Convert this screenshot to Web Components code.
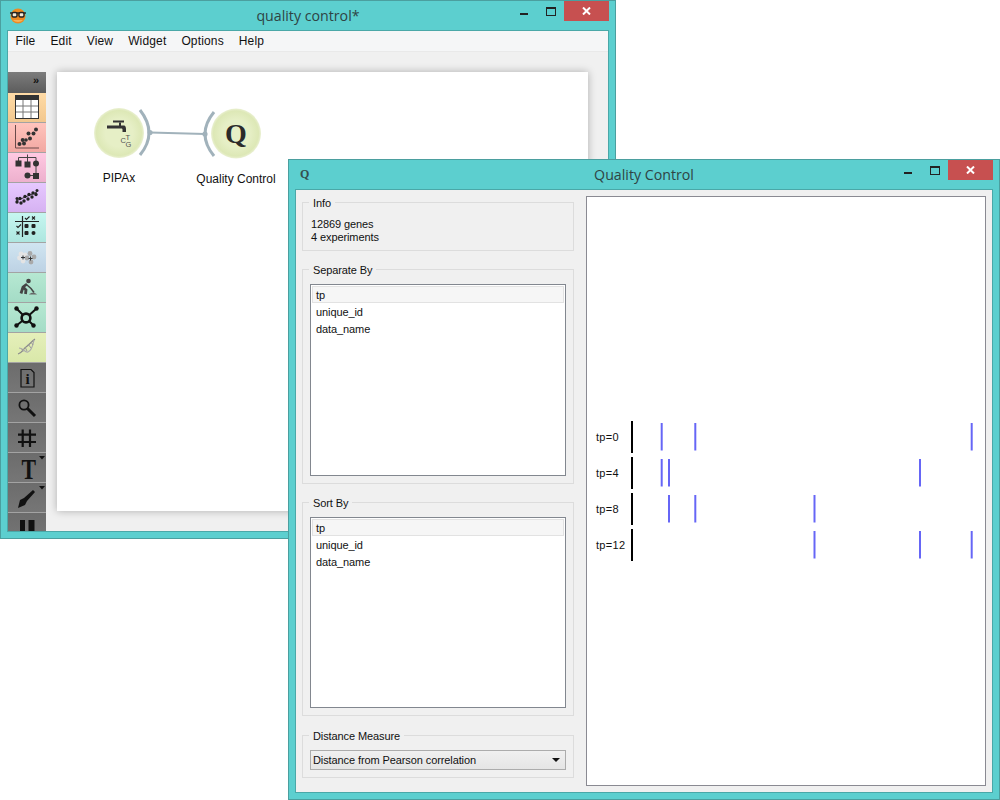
<!DOCTYPE html>
<html>
<head>
<meta charset="utf-8">
<title>quality control</title>
<style>
  html, body { margin: 0; padding: 0; background: #fff; }
  body { width: 1000px; height: 800px; position: relative; overflow: hidden; font-family: "Open Sans", "Liberation Sans", sans-serif; }
  #canvasWin { left: 0; top: 0; width: 616px; height: 539px; }
  #qcWin { left: 288px; top: 159px; width: 712px; height: 641px; }
  .lower { margin-top: 1px; }
</style>
</head>
<body>

<os-window id="canvasWin" heading="quality control*">
  <svg slot="icon" width="18" height="16" viewBox="0 0 18 16">
    <circle cx="9" cy="8" r="7.5" fill="#ee8a22"/>
    <path d="M4 12c2 2.6 8 2.6 10 0" fill="#f7b25a"/>
    <path d="M1 5l16 0" stroke="#222" stroke-width="1.4"/>
    <rect x="3" y="4.5" width="5" height="4.5" rx="1.5" fill="#f4e9d8" stroke="#222" stroke-width="1.4"/>
    <rect x="10" y="4.5" width="5" height="4.5" rx="1.5" fill="#f4e9d8" stroke="#222" stroke-width="1.4"/>
  </svg>
  <menu-bar>
    <span>File</span><span>Edit</span><span>View</span><span>Widget</span><span>Options</span><span>Help</span>
  </menu-bar>
  <schema-workspace>
    <dock-bar slot="dock">
      <dock-button tint="#ffdba6,#f2c78e" icon="table"></dock-button>
      <dock-button tint="#ffc4bd,#f2a8a2" icon="scatter"></dock-button>
      <dock-button tint="#ffc9e2,#edb0cd" icon="tree"></dock-button>
      <dock-button tint="#e6c8ff,#d6b2f2" icon="cloud"></dock-button>
      <dock-button tint="#c6f6f0,#ade6df" icon="grid"></dock-button>
      <dock-button tint="#d0e5f1,#bdd2e4" icon="blobs"></dock-button>
      <dock-button tint="#b6e8d2,#a4dcc6" icon="worker"></dock-button>
      <dock-button tint="#b6e8d2,#a4dcc6" icon="network"></dock-button>
      <dock-button tint="#e5efba,#d9e8a9" icon="dna"></dock-button>
      <dock-button tint="#6c6c6c,#767676" icon="info"></dock-button>
      <dock-button tint="#6c6c6c,#767676" icon="search"></dock-button>
      <dock-button tint="#6c6c6c,#767676" icon="hash"></dock-button>
      <dock-button tint="#6c6c6c,#767676" icon="text"></dock-button>
      <dock-button tint="#6c6c6c,#767676" icon="pen"></dock-button>
      <dock-button tint="#6c6c6c,#767676" icon="pause"></dock-button>
    </dock-bar>
    <schema-canvas></schema-canvas>
  </schema-workspace>
</os-window>

<os-window id="qcWin" heading="Quality Control">
  <span slot="icon" style="font:bold 12px 'Liberation Serif',serif;color:#35504f;display:block;margin-left:3px;margin-top:-2px">Q</span>
  <qc-layout>
    <group-box label="Info" slot="side">
      <div style="padding:1px 0 0 1px;margin-bottom:-1px;line-height:13px">12869 genes<br>4 experiments</div>
    </group-box>
    <group-box label="Separate By" grow slot="side">
      <list-view items="tp,unique_id,data_name"></list-view>
    </group-box>
    <group-box label="Sort By" grow slot="side">
      <list-view items="tp,unique_id,data_name"></list-view>
    </group-box>
    <group-box class="lower" label="Distance Measure" slot="side">
      <combo-box text="Distance from Pearson correlation"></combo-box>
    </group-box>
    <qc-plot slot="plot">
      <plot-row label="tp=0" ticks="39.7,73.3,349.700"></plot-row>
      <plot-row label="tp=4" ticks="39.7,47,298"></plot-row>
      <plot-row label="tp=8" ticks="47,73.3,192.500"></plot-row>
      <plot-row label="tp=12" ticks="192.500,298,349.700"></plot-row>
    </qc-plot>
  </qc-layout>
</os-window>

<script>
  // Window with title bar and caption buttons
  class OsWindow extends HTMLElement {
    constructor() {
      super();
      this.attachShadow({ mode: 'open' });
      this.shadowRoot.innerHTML = `
        <style>
          :host {
            position: absolute;
            display: flex;
            flex-direction: column;
            box-sizing: border-box;
            background: #5ccfcf;
            border: 1px solid #4b9f9f;
            padding: 0 6px 6px;
          }
          .bar {
            height: 29px;
            flex: none;
            display: grid;
            grid-template-columns: 1fr auto 1fr;
            color: #2b3f3f;
          }
          .icon { display: flex; align-items: center; padding-left: 2px; }
          .title { font: 14.2px/30px "Open Sans", "Liberation Sans", sans-serif; color: #2f4444; }
          .caption { display: flex; justify-content: flex-end; align-items: flex-start; }
          .min { width: 8px; height: 2px; background: #222; margin: 12px 18px 0 0; }
          .max { width: 8px; height: 6px; border: 1px solid #222; border-top-width: 2px; margin: 6px 8px 0 0; }
          .close { width: 45px; height: 20px; background: #c75050; display: flex; align-items: center; justify-content: center; }
          .client {
            flex: 1;
            min-height: 0;
            display: flex;
            flex-direction: column;
            overflow: hidden;
            border: 1px solid #4aa8a8;
            margin: 0;
            background: #f0f0f0;
          }
        </style>
        <div class="bar">
          <div class="icon"><slot name="icon"></slot></div>
          <div class="title"></div>
          <div class="caption">
            <div class="min"></div>
            <div class="max"></div>
            <div class="close">
              <svg width="9" height="8" viewBox="0 0 9 8"><path d="M1 0.5l7 7M8 0.5l-7 7" stroke="#fff" stroke-width="2"/></svg>
            </div>
          </div>
        </div>
        <div class="client"><slot></slot></div>
      `;
    }

    connectedCallback() {
      this.shadowRoot.querySelector('.title').textContent = this.getAttribute('heading');
    }
  }

  class MenuBar extends HTMLElement {
    constructor() {
      super();
      this.attachShadow({ mode: 'open' });
      this.shadowRoot.innerHTML = `
        <style>
          :host {
            display: flex;
            flex: none;
            height: 20px;
            gap: 15px;
            padding-left: 7.5px;
            align-items: center;
            background: #f5f6f7;
            border-bottom: 1px solid #e9e9e9;
            font: 12px "Liberation Sans", sans-serif;
            letter-spacing: .15px;
            color: #111;
          }
        </style>
        <slot></slot>
      `;
    }
  }

  class SchemaWorkspace extends HTMLElement {
    constructor() {
      super();
      this.attachShadow({ mode: 'open' });
      this.shadowRoot.innerHTML = `
        <style>
          :host { display: flex; flex: 1; min-height: 0; padding-top: 20px; background: #f0f0f0; }
        </style>
        <slot name="dock"></slot>
        <slot></slot>
      `;
    }
  }

  class DockBar extends HTMLElement {
    constructor() {
      super();
      this.attachShadow({ mode: 'open' });
      this.shadowRoot.innerHTML = `
        <style>
          :host { display: block; flex: none; width: 38px; overflow: hidden; background: #6c6c6c; }
          .head {
            height: 21px;
            background: linear-gradient(#7c7c7c, #5c5c5c);
            display: flex;
            justify-content: flex-end;
            padding-right: 7px;
            font: bold 11px/17px "Liberation Sans", sans-serif;
            color: #111;
          }
        </style>
        <div class="head">»</div>
        <slot></slot>
      `;
    }
  }

  const dockIcons = {
    table: `<rect x="7.5" y="2.5" width="23" height="23" fill="#fff" stroke="#333"/><rect x="7" y="2" width="24" height="5" fill="#333"/><path d="M15 7v18M23 7v18M8 13h22M8 19h22" stroke="#777"/>`,
    scatter: `<path d="M7.5 2v23H31" fill="none" stroke="#6a4a4a" stroke-width="1"/>
      <g fill="#333"><circle cx="11.5" cy="21" r="2"/><circle cx="16" cy="20.5" r="2"/><circle cx="14.7" cy="17" r="2"/><circle cx="18" cy="17" r="1.8"/><circle cx="22" cy="15.5" r="2"/><circle cx="20.5" cy="10.5" r="2"/><circle cx="25.5" cy="10.5" r="2"/><circle cx="28" cy="6.5" r="2"/></g>`,
    tree: `<path d="M10.5 10V4.5H28V10M19.5 1.5V11M28 10V23M19.5 22.5H28" fill="none" stroke="#444"/>
      <g fill="#333"><rect x="7.5" y="7.5" width="6" height="6"/><rect x="16.5" y="8.5" width="6" height="6"/><circle cx="28" cy="10.5" r="3"/><circle cx="19.5" cy="22.5" r="3"/><rect x="25" y="20" width="6" height="6"/></g>`,
    cloud: `<path d="M8 18L29 9" stroke="#333"/><g fill="#222"><circle cx="9" cy="19" r="1.7"/><circle cx="12" cy="15.500" r="1.700"/><circle cx="13" cy="20" r="1.700"/><circle cx="16" cy="18" r="1.700"/><circle cx="17" cy="13.500" r="1.700"/><circle cx="20" cy="16" r="1.700"/><circle cx="21" cy="11.500" r="1.700"/><circle cx="24" cy="14" r="1.700"/><circle cx="25" cy="10" r="1.700"/><circle cx="28" cy="11.500" r="1.700"/><circle cx="29" cy="7.500" r="1.500"/><circle cx="9" cy="15.500" r="1.500"/></g>`,
    grid: `<path d="M7 8.5h24M14.5 3v21" stroke="#222" stroke-width="1.2"/>
      <g fill="#222"><rect x="16.5" y="11" width="4" height="4" rx="1"/><rect x="23.5" y="11" width="4" height="4" rx="1"/><rect x="16.5" y="18" width="4" height="4" rx="1"/><circle cx="25.5" cy="20" r="2"/></g>
      <path d="M8.5 13l1.5 1.5 3-3M17 5l1.5 1.500 3-3M8.5 18.5l3 3M11.5 18.5l-3 3M24 3.5l3 3M27 3.5l-3 3" fill="none" stroke="#222" stroke-width="1.1"/>`,
    blobs: `<g fill="#e4e4e4"><circle cx="13" cy="11" r="2.4"/><circle cx="17" cy="12" r="2.4"/><circle cx="11.5" cy="15" r="2.4"/><circle cx="15" cy="18" r="2.4"/></g>
      <g fill="#a9a9a9"><circle cx="22" cy="10.5" r="2.4"/><circle cx="26" cy="14" r="2.4"/><circle cx="19" cy="15" r="2.4"/><circle cx="23" cy="19" r="2.4"/></g>
      <path d="M13 14.5h4M15 12.5v4M20.5 15.5h4M22.5 13.5v4" stroke="#333"/>`,
    worker: `<circle cx="20.5" cy="8" r="2.3" fill="#444"/>
      <path d="M19 11l-4 3-2 6.500M15 14l3 3-.5 4" fill="none" stroke="#444" stroke-width="2.800"/>
      <path d="M19 12l4 3.500 3 4" fill="none" stroke="#444" stroke-width="1.500"/>
      <path d="M21 21.500c2-2.500 6-2.500 8 0z" fill="#666"/>`,
    network: `<path d="M8.5 5.5L18 15M28.5 5.5L18 15M8.500 22.500L18 15M25.5 22.500L18 15" stroke="#111" stroke-width="2"/>
      <circle cx="18" cy="15" r="4.4" fill="#a9dfc9" stroke="#111" stroke-width="2.600"/>
      <g fill="#111"><circle cx="8.5" cy="5.5" r="2.2"/><circle cx="28.5" cy="5.5" r="2.2"/><circle cx="8.500" cy="22.500" r="2.2"/><circle cx="25.5" cy="22.500" r="2.2"/></g>`,
    dna: `<path d="M10 21c4-1 5-5 8-7s6-6 9-8" fill="none" stroke="#8a8a8a" stroke-width="1.2"/><path d="M11 15c4 0 6 5 9 4s5-7 6-12" fill="none" stroke="#aaa" stroke-width="1.2"/>
      <path d="M14 16l1 3M17 14l2 4M20 11l3 4M23 9l2 3" stroke="#999"/>`,
    info: `<path d="M13 6.5h10l3 3v14.5H13z" fill="none" stroke="#111" stroke-width="1.2"/><text x="19.5" y="21" text-anchor="middle" font-family="Liberation Serif, serif" font-weight="bold" font-size="15" fill="#111">i</text>`,
    search: `<circle cx="16" cy="12" r="4.6" fill="none" stroke="#111" stroke-width="1.800"/><path d="M19.5 15.5L27 23" stroke="#111" stroke-width="3"/>`,
    hash: `<path d="M14.7 6.5V24M22 6.5V24M10 11.7h18M10 19h18" stroke="#111" stroke-width="2.2"/>`,
    text: `<text transform="scale(.75,1)" x="27.700" y="25.500" text-anchor="middle" font-family="Liberation Serif, serif" font-weight="bold" font-size="29" fill="#111">T</text><path d="M31 3h6l-3 3.4z" fill="#111"/>`,
    pen: `<path d="M10 25l2-8 4-2 9-8 2 2-8 9-2 4z" fill="#111"/><path d="M31 3h6l-3 3.4z" fill="#111"/>`,
    pause: `<rect x="12" y="7" width="5" height="22" fill="#111"/><rect x="20.5" y="7" width="6" height="22" fill="#111"/>`
  };

  class DockButton extends HTMLElement {
    constructor() {
      super();
      this.attachShadow({ mode: 'open' });
    }

    connectedCallback() {
      const [from, to] = this.getAttribute('tint').split(',');
      const icon = dockIcons[this.getAttribute('icon')];
      this.shadowRoot.innerHTML = `
        <style>
          :host {
            display: block;
            height: 30px;
            box-sizing: border-box;
            border-bottom: 1px solid #a3a3a3;
            background: linear-gradient(${from}, ${to});
          }
          svg { display: block; overflow: visible; }
        </style>
        <svg width="38" height="29" viewBox="0 0 38 29">${icon}</svg>
      `;
    }
  }

  // White canvas with the two widgets and their link
  class SchemaCanvas extends HTMLElement {
    constructor() {
      super();
      this.attachShadow({ mode: 'open' });
      this.shadowRoot.innerHTML = `
        <style>
          :host {
            display: block;
            position: relative;
            flex: none;
            width: 531px;
            height: 439px;
            margin-left: 11px;
            background: #fff;
            box-shadow: 0 0 8px rgba(0,0,0,.28);
          }
          svg { position: absolute; left: 0; top: 0; }
          .name {
            position: absolute;
            font: 12px/14px "Liberation Sans", sans-serif;
            color: #111;
            width: 120px;
            text-align: center;
          }
        </style>
        <svg width="531" height="439" viewBox="57 72 531 439">
          <defs>
            <radialGradient id="disc">
              <stop offset="0.55" stop-color="#e6efc6"/>
              <stop offset="0.9" stop-color="#dde8b6"/>
              <stop offset="1" stop-color="#eaf0d2"/>
            </radialGradient>
          </defs>
          <path d="M150 132.5L205 134" stroke="#a1b2bb" stroke-width="2"/>
          <path d="M140 110Q158 133 140 155" fill="none" stroke="#a1b2bb" stroke-width="3"/>
          <path d="M214 112Q196 134 214 156" fill="none" stroke="#a1b2bb" stroke-width="3"/>
          <circle cx="150" cy="132.5" r="2.6" fill="#a1b2bb"/>
          <circle cx="205" cy="134" r="2.6" fill="#a1b2bb"/>
          <circle cx="119" cy="133" r="25" fill="url(#disc)"/>
          <circle cx="236" cy="133.500" r="25" fill="url(#disc)"/>
          <path d="M107 125.500h12v-3h2v3h3c1.500 0 2 2 2 3.500v3h-3.500v-2.500c0-.5-.5-1-1-1h-14.500z" fill="#333"/>
          <rect x="113" y="120.500" width="11" height="2" fill="#333"/>
          <text x="120.500" y="143" font-family="Liberation Sans, sans-serif" font-size="7.500" fill="#555">C</text>
          <text x="125.500" y="140" font-family="Liberation Sans, sans-serif" font-size="7.500" fill="#555">T</text>
          <text x="125.500" y="147" font-family="Liberation Sans, sans-serif" font-size="7.500" fill="#555">G</text>
          <text x="236" y="143" text-anchor="middle" font-family="Liberation Serif, serif" font-weight="bold" font-size="28" fill="#2b2b2b">Q</text>
        </svg>
        <div class="name" style="left:2px;top:99px">PIPAx</div>
        <div class="name" style="left:119px;top:100px">Quality Control</div>
      `;
    }
  }

  // Two column layout of the Quality Control dialog
  class QcLayout extends HTMLElement {
    constructor() {
      super();
      this.attachShadow({ mode: 'open' });
      this.shadowRoot.innerHTML = `
        <style>
          :host {
            display: flex;
            flex: 1;
            min-height: 0;
            gap: 12px;
            padding: 6px;
            font: 11px "Liberation Sans", sans-serif;
            letter-spacing: -.1px;
            color: #111;
          }
          .side { flex: none; width: 272px; display: flex; flex-direction: column; gap: 12px; padding-bottom: 8px; }
          .plot { flex: 1; display: flex; min-width: 0; }
        </style>
        <div class="side"><slot name="side"></slot></div>
        <div class="plot"><slot name="plot"></slot></div>
      `;
    }
  }

  class GroupBox extends HTMLElement {
    constructor() {
      super();
      this.attachShadow({ mode: 'open' });
    }

    connectedCallback() {
      this.shadowRoot.innerHTML = `
        <style>
          :host { display: flex; flex: ${this.hasAttribute('grow') ? '1' : 'none'}; min-height: 0; }
          fieldset {
            flex: 1;
            min-width: 0;
            margin: 0;
            padding: 0 7px 7px;
            border: 1px solid #dcdcdc;
            display: flex;
            flex-direction: column;
          }
          legend { margin-left: -1px; padding: 0 4px; line-height: 13px; }
          legend span { display: inline-block; transform: translateY(1px); }
          .body { flex: 1; display: flex; flex-direction: column; min-height: 0; padding-top: 8px; }
        </style>
        <fieldset>
          <legend><span>${this.getAttribute('label')}</span></legend>
          <div class="body"><slot></slot></div>
        </fieldset>
      `;
    }
  }

  class ListView extends HTMLElement {
    constructor() {
      super();
      this.attachShadow({ mode: 'open' });
    }

    connectedCallback() {
      const rows = this.getAttribute('items').split(',')
        .map((name, i) => `<div class="row${i === 0 ? ' current' : ''}">${name}</div>`)
        .join('');
      this.shadowRoot.innerHTML = `
        <style>
          :host {
            display: block;
            flex: 1;
            box-sizing: border-box;
            background: #fff;
            border: 1px solid #82878f;
            padding: 1px;
          }
          .row { height: 17px; line-height: 17px; padding: 1px 0 0 4px; box-sizing: border-box; }
          .current { background: #f6f6f6; border: 1px solid #e2e2e2; padding: 1px 0 0 3px; line-height: 15px; }
        </style>
        ${rows}
      `;
    }
  }

  class ComboBox extends HTMLElement {
    constructor() {
      super();
      this.attachShadow({ mode: 'open' });
    }

    connectedCallback() {
      this.shadowRoot.innerHTML = `
        <style>
          :host {
            display: flex;
            align-items: center;
            justify-content: space-between;
            height: 20px;
            box-sizing: border-box;
            border: 1px solid #acacac;
            background: linear-gradient(#f0f0f0, #e5e5e5);
            padding: 0 5px 0 2px;
          }
          .arrow { width: 0; height: 0; border: 4px solid transparent; border-top: 4px solid #111; border-bottom: 0; }
        </style>
        <span>${this.getAttribute('text')}</span>
        <span class="arrow"></span>
      `;
    }
  }

  class QcPlot extends HTMLElement {
    constructor() {
      super();
      this.attachShadow({ mode: 'open' });
      this.shadowRoot.innerHTML = `
        <style>
          :host {
            display: flex;
            flex: 1;
            flex-direction: column;
            justify-content: center;
            box-sizing: border-box;
            background: #fff;
            border: 1px solid #8a8a92;
          }
        </style>
        <slot></slot>
      `;
    }
  }

  class PlotRow extends HTMLElement {
    constructor() {
      super();
      this.attachShadow({ mode: 'open' });
    }

    connectedCallback() {
      const ticks = this.getAttribute('ticks').split(',')
        .map(x => `<line x1="${x}" x2="${x}" y1="4" y2="31.500" stroke="#6666f6" stroke-width="2"/>`)
        .join('');
      this.shadowRoot.innerHTML = `
        <style>
          :host { display: flex; align-items: center; height: 36px; }
          .label { width: 35px; padding-left: 9px; box-sizing: border-box; flex: none; white-space: nowrap; letter-spacing: .3px; }
          svg { flex: none; display: block; }
        </style>
        <div class="label">${this.getAttribute('label')}</div>
        <svg width="363" height="36" viewBox="0 0 363 36">
          <rect x="9" y="2" width="2" height="32" fill="#000"/>
          ${ticks}
        </svg>
      `;
    }
  }

  customElements.define('os-window', OsWindow);
  customElements.define('menu-bar', MenuBar);
  customElements.define('schema-workspace', SchemaWorkspace);
  customElements.define('dock-bar', DockBar);
  customElements.define('dock-button', DockButton);
  customElements.define('schema-canvas', SchemaCanvas);
  customElements.define('qc-layout', QcLayout);
  customElements.define('group-box', GroupBox);
  customElements.define('list-view', ListView);
  customElements.define('combo-box', ComboBox);
  customElements.define('qc-plot', QcPlot);
  customElements.define('plot-row', PlotRow);
</script>
</body>
</html>
